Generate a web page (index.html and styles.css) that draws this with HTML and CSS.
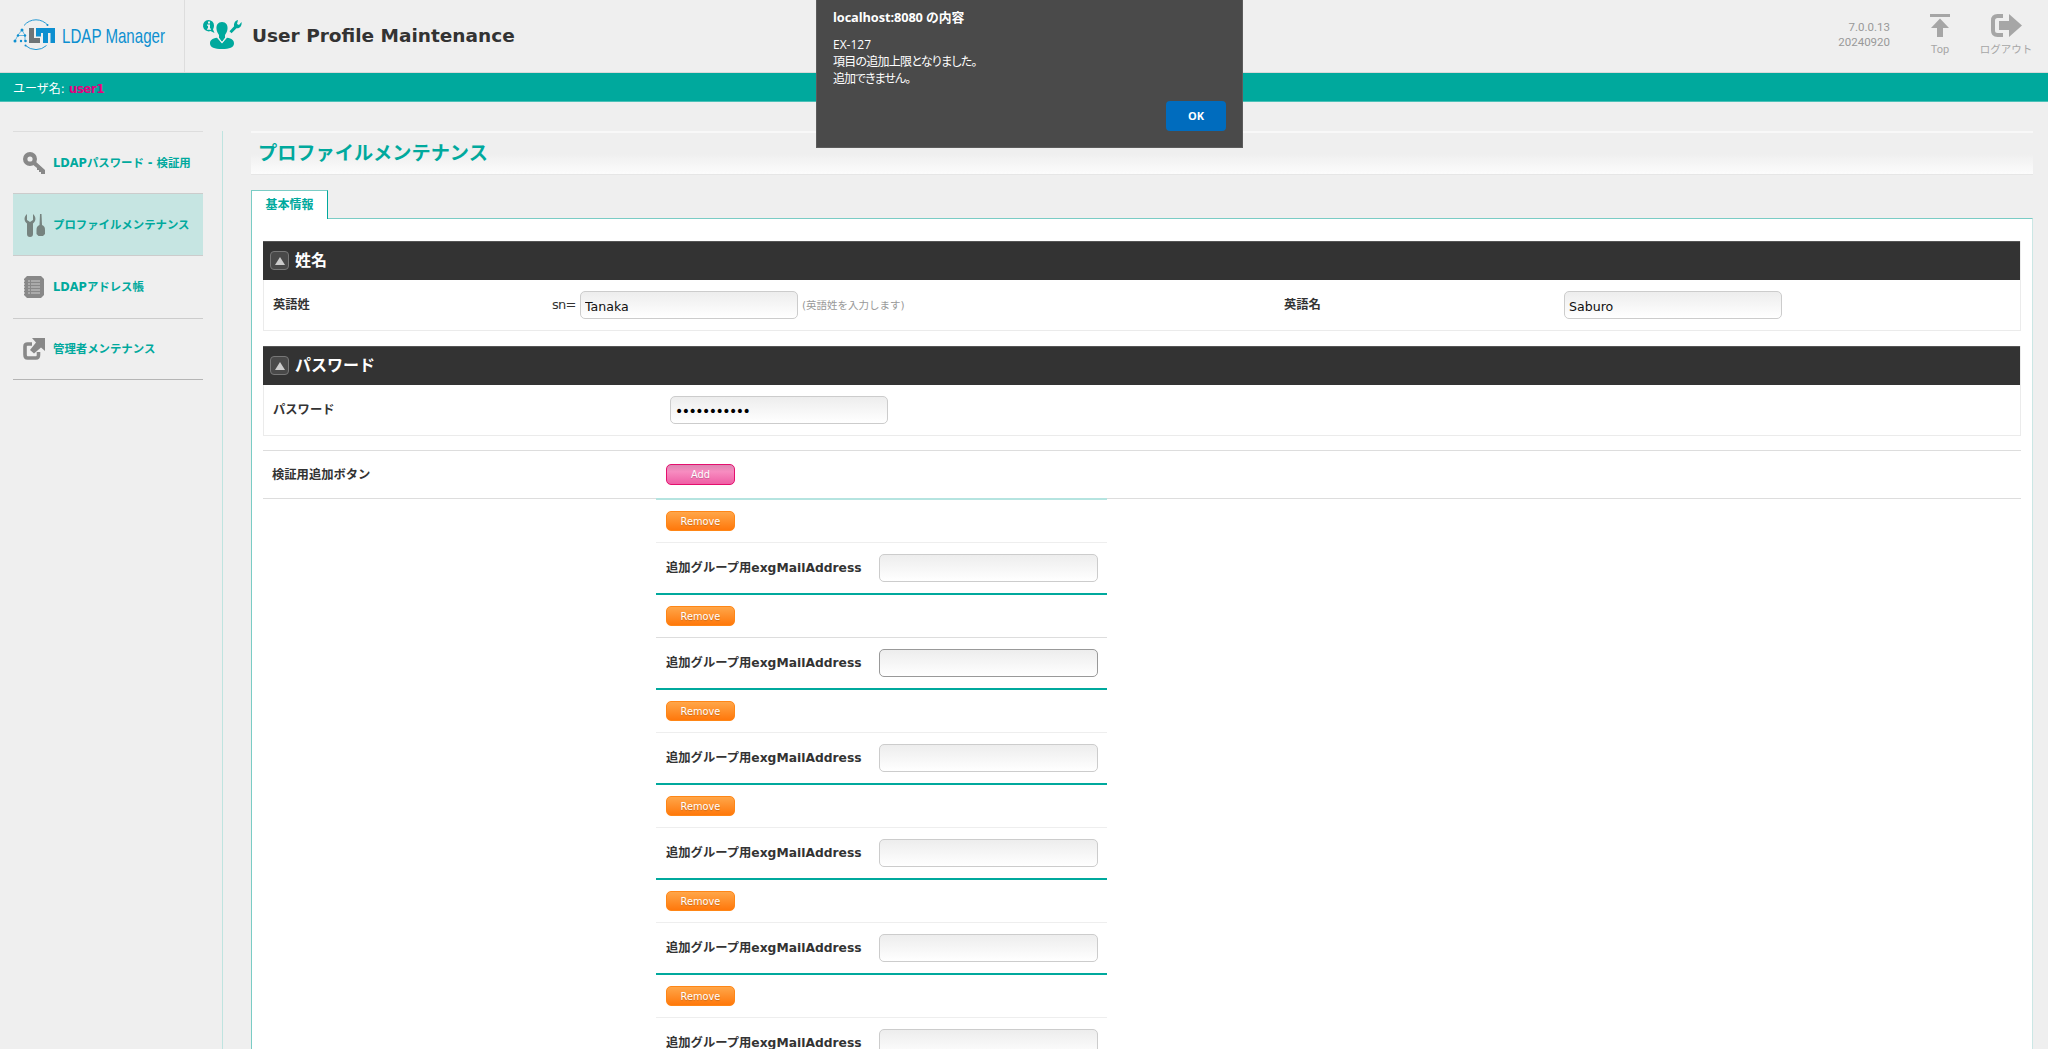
FILE: index.html
```html
<!DOCTYPE html>
<html lang="ja">
<head>
<meta charset="utf-8">
<title>LDAP Manager</title>
<link rel="stylesheet" href="styles.css">
</head>
<body>
<header class="header">
  <div class="brand">
    <svg width="176" height="60" viewBox="5 0 176 60">
      <g fill="none" stroke="#0d8fd0" stroke-width=".9">
        <path d="M24 25.500a15.500 15.500 0 0 1 24 0M25.500 45.500a15.500 15.500 0 0 0 21 0"/>
        <path d="M22 30l-4 5-3 6M22 30l3 5.500v5.500M18 35.500h6" stroke-width=".6"/>
      </g>
      <g fill="#0d8fd0"><circle cx="22" cy="30" r="1.5"/><circle cx="18" cy="35.500" r="1.200"/><circle cx="25" cy="35.500" r="1.200"/><circle cx="15" cy="41" r="1.500"/><circle cx="21" cy="41" r="1.200"/><circle cx="25.500" cy="41" r="1.300"/><circle cx="47.500" cy="25" r="1"/><circle cx="25.500" cy="45.500" r="1"/></g>
      <path d="M29 28h5v10h6v5H29z" fill="#6e7477"/>
      <path d="M36 28h19v15h-4.500V33H48v10h-5V33h-2v3.500h-5z" fill="#0d8fd0"/>
      <text x="62" y="43" class="brand-name" textLength="103" lengthAdjust="spacingAndGlyphs">LDAP Manager</text>
    </svg>
  </div>
  <div class="app">
    <svg width="40" height="32" viewBox="203 19 40 32" fill="#00a99d">
      <path d="M208.500 20a5.500 5.500 0 0 1 5.500 5.500c0 2-.8 3.500-1 4l1.500 3.500-4-1.900A5.700 5.700 0 1 1 208.500 20z"/>
      <path d="M208 21.500h2v2h-2zM207 24.500h3v4h1v1.200h-4v-1.200h1v-2.800h-1z" fill="#efefef"/>
      <path d="M222 22c4 0 6 3 5.500 7-.4 3-1.500 4.500-2.500 6v3l-3 4-3-4v-3c-1-1.500-2.200-3-2.500-6-.4-4 1.500-7 5.500-7z"/>
      <path d="M217 37.800l5 5.700 5-5.700c5 .4 7 2.700 7 5.700 0 3.800-4.500 5.500-12 5.500s-12-1.700-12-5.500c0-3 2-5.300 7-5.700z"/>
      <path d="M218.500 38l3.500 4.500 3.500-4.500" fill="none" stroke="#efefef" stroke-width="1"/>
      <path d="M238 20l-1 4 2 1 2.500-3c.7 4-1.800 6.700-5 6.200l-5 5-2-2 4.600-5c-.6-3 1.400-5.800 3.900-6.200z"/>
    </svg>
    <h1>User Profile Maintenance</h1>
  </div>
  <div class="version">7.0.0.13<br>20240920</div>
  <a class="tool top">
    <svg width="20" height="23" viewBox="0 0 20 23" fill="#a6a6a6"><path d="M0 0h20v3H0zM10 4.500l9 9.500h-6v9H7v-9H1z"/></svg>
    <span>Top</span>
  </a>
  <a class="tool logout">
    <svg width="31" height="23" viewBox="0 0 31 23"><path d="M12 2H6.500C3.500 2 2 3.500 2 6.500v10C2 19.500 3.500 21 6.500 21H12" fill="none" stroke="#a6a6a6" stroke-width="4"/><path d="M8 7h10V0l13 11.500L18 23v-7H8z" fill="#a6a6a6"/></svg>
    <span>ログアウト</span>
  </a>
</header>
<div class="userbar"><span>ユーザ名:</span><b>user1</b></div>
<div class="layout">
  <nav class="side">
    <a class="item"><svg width="22" height="22" viewBox="0 0 22 22"><circle cx="7" cy="7" r="4.800" fill="none" stroke="#888" stroke-width="4.400"/><path d="M9 12l3-3 10 9v4h-4v-2h-2v-2h-2v-2z" fill="#888"/></svg><span>LDAPパスワード - 検証用</span></a>
    <a class="item on"><svg width="22" height="22" viewBox="0 0 22 22" fill="#76837f"><path d="M4 0v6l3 2 3-2V0c3.500 3 3 7 0 9.500V20a3 3 0 0 1-6 0V9.500C1 7 .5 3 4 0zM17 0h1.500l.5 11c2 1 3 2 3 5v4l-2 2h-4.500l-2-2v-4c0-3 1-4 3-5z"/></svg><span>プロファイルメンテナンス</span></a>
    <a class="item"><svg width="22" height="22" viewBox="0 0 22 22"><path d="M4 0h14l3 3v16l-3 3H4l-3-3V3z" fill="#888"/><path d="M5 5h2M8 5h9M5 8h2M8 8h9M5 11h2M8 11h9M5 14h2M8 14h9M5 17h2M8 17h9" stroke="#ccc" stroke-width="1.200"/><path d="M0 5h2M0 8h2M0 11h2M0 14h2M0 17h2" stroke="#efefef"/></svg><span>LDAPアドレス帳</span></a>
    <a class="item"><svg width="22" height="22" viewBox="0 0 22 22"><path d="M9 6H4.500Q2 6 2 8.500v8Q2 20 4.500 20H13q2.500 0 2.500-3v-3" fill="none" stroke="#888" stroke-width="3.600"/><path d="M9 0h13v13l-4-3.500-7 6L7 12l6-7.500z" fill="#888"/></svg><span>管理者メンテナンス</span></a>
  </nav>
  <main class="main">
    <h2>プロファイルメンテナンス</h2>
    <div class="tabs"><span class="tab">基本情報</span></div>
    <div class="panel">
      <section class="box">
        <h3><i class="toggle"></i><span>姓名</span></h3>
        <div class="row">
          <label class="label">英語姓</label><span class="attr">sn=</span><input class="field" value="Tanaka"><span class="hint">(英語姓を入力します)</span>
          <label class="label second">英語名</label><input class="field" value="Saburo">
        </div>
      </section>
      <section class="box">
        <h3><i class="toggle"></i><span>パスワード</span></h3>
        <div class="row pw"><label class="label">パスワード</label><input class="field" type="text" value="•••••••••••"></div>
      </section>
      <div class="addrow"><label class="label">検証用追加ボタン</label><button class="btn add">Add</button></div>
      <div class="groups">
        <div class="group first"><div class="ctl"><button class="btn">Remove</button></div><div class="entry"><label>追加グループ用<b>exgMailAddress</b></label><input class="field"></div></div>
        <div class="group"><div class="ctl dark"><button class="btn">Remove</button></div><div class="entry"><label>追加グループ用<b>exgMailAddress</b></label><input class="field strong"></div></div>
        <div class="group"><div class="ctl"><button class="btn">Remove</button></div><div class="entry"><label>追加グループ用<b>exgMailAddress</b></label><input class="field"></div></div>
        <div class="group"><div class="ctl"><button class="btn">Remove</button></div><div class="entry"><label>追加グループ用<b>exgMailAddress</b></label><input class="field"></div></div>
        <div class="group"><div class="ctl"><button class="btn">Remove</button></div><div class="entry"><label>追加グループ用<b>exgMailAddress</b></label><input class="field"></div></div>
        <div class="group"><div class="ctl"><button class="btn">Remove</button></div><div class="entry"><label>追加グループ用<b>exgMailAddress</b></label><input class="field"></div></div>
      </div>
    </div>
  </main>
</div>
<div class="dialog" role="alertdialog">
  <strong>localhost:8080 <span>の内容</span></strong>
  <p>EX-127<br><span class="m1">項目の追加上限となりました。</span><br><span class="m2">追加できません。</span></p>
  <button class="ok">OK</button>
</div>
</body>
</html>
```
FILE: styles.css
```css
* { box-sizing: border-box; }
body {
  margin: 0;
  height: 1049px;
  overflow: hidden;
  background: #efefef;
  color: #333;
  font: 12px/16px "DejaVu Sans", "Noto Sans CJK JP", sans-serif;
}
h1, h2, h3, p { margin: 0; }
svg { display: block; flex: none; overflow: visible; }

.header { display: flex; height: 73px; border-bottom: 1px solid #d9d9d9; }
.brand { width: 185px; padding: 0 0 0 5px; border-right: 1px solid #ddd; }
.brand-name { font: 21px "Liberation Sans", sans-serif; fill: #0d8fd0; }
.app { display: flex; flex: 1; padding: 19px 0 0 18px; }
.app h1 { margin-left: 9px; font: bold 18.500px/34px "DejaVu Sans", sans-serif; white-space: nowrap; }
.version { padding-top: 20px; font: 11.500px/15px Roboto, sans-serif; color: #999; text-align: right; }
.tool { display: flex; flex-direction: column; align-items: center; padding-top: 14px; color: #a6a6a6; }
.tool span { margin-top: 5px; font: 11px/16px Roboto, "Noto Sans CJK JP", sans-serif; white-space: nowrap; }
.top { width: 40px; margin-left: 30px; }
.logout { width: 56px; margin: 0 14px 0 18px; }
.logout span { font-size: 10.500px; }

.userbar { display: flex; align-items: center; gap: 5px; height: 29px; padding: 3px 0 0 13px; background: #00a99d; border-bottom: 1px solid #4bc1b8; color: #fff; font-size: 12px; }
.userbar b { margin-left: -1px; color: #e4007f; letter-spacing: -.6px; }

.layout { display: flex; padding-top: 29px; height: 947px; }
.side { width: 223px; padding: 0 19px 0 13px; border-right: 1px solid #bfe4e0; }
.item { display: flex; align-items: center; gap: 8px; height: 62.300px; padding: 0 0 0 10px; border-top: 1px solid #ccc; color: #00a99d; font-weight: bold; font-size: 11.400px; white-space: nowrap; }
.item span { padding-top: 1px; }
.item:first-child { height: 62px; border-top-color: #ddd; }
.item:last-child { border-bottom: 1px solid #b5b5b5; }
.item.on { background: #c6e5e2; }

.main { flex: 1; padding: 0 15px 0 28px; min-width: 0; }
.main h2 { height: 44px; padding-left: 7px; border-top: 2px solid #f8f8f8; border-bottom: 1px solid #e6e6e6; background: linear-gradient(#efefef 50%, #fcfcfc); color: #00a99d; font-size: 19.200px; line-height: 41px; }
.tabs { display: flex; height: 44px; padding-top: 15px; }
.tab { z-index: 1; width: 77px; height: 29px; border: 1px solid #7accc5; border-right-color: #00a99d; border-bottom: 0; background: #fff; color: #00a99d; font-weight: bold; text-align: center; line-height: 28px; }
.panel { height: 840px; margin-top: -1px; padding: 22px 11px 0; border: 1px solid #7accc5; border-right-color: #cbe7e5; background: #fff; }

.box { margin-bottom: 15px; border: 1px solid #ebebeb; border-top: 0; }
.box h3 { display: flex; align-items: center; gap: 6px; height: 39px; margin-left: -1px; padding: 0 0 1px 7px; background: #333; border-top: 1px solid #555; color: #fff; font-size: 16px; }
.toggle { display: grid; place-items: center; width: 19px; height: 19px; border: 1px solid #777; border-radius: 4px; background: #494949; }
.toggle::before { content: ""; border: 5px solid transparent; border-top: 0; border-bottom: 8px solid #ccc; }
.row { display: flex; align-items: center; height: 50px; padding-left: 9px; }
.label { width: 279px; font-weight: bold; font-size: 12.300px; }
.attr { width: 28px; font-size: 13px; letter-spacing: -.8px; }
.field { width: 218px; height: 28px; padding: 3px 4px 1px; border: 1px solid #ccc; border-radius: 5px; background: linear-gradient(#ededed, #fff); font: 12.600px "DejaVu Sans", sans-serif; color: #111; }
.field.strong { border-color: #999; }
.hint { width: 486px; padding-left: 4px; color: #999; font-size: 10.500px; }
.label.second { width: 280px; }
.pw .label { width: 397px; }
.pw .field { font-size: 14px; letter-spacing: -1.510px; color: #000; }
.addrow { display: flex; align-items: center; height: 49px; margin-top: -1px; padding-left: 9px; border: solid #ddd; border-width: 1px 0; }
.addrow .label { width: 394px; }
.btn { display: block; width: 69px; height: 20px; padding: 0; border: 1px solid #ff8616; border-radius: 5px; background: linear-gradient(#ffa649, #ff780b); color: #fff; font: 9.800px "DejaVu Sans", sans-serif; text-shadow: 0 1px 1px #0003; }
.btn.add { height: 21px; border-color: #e4106e; background: linear-gradient(#dd86b2, #f78cc0 35%, #ef5fa5); }
.groups { width: 451px; margin: -1px 0 0 393px; }
.groups .field { width: 219px; }
.group { height: 95px; border-top: 2px solid #00a99d; }
.group.first { border-top-color: #b5e4e0; }
.ctl { height: 43px; padding: 11px 10px 0; border-bottom: 1px solid #eee; }
.ctl.dark { border-color: #ddd; }
.entry { display: flex; align-items: center; justify-content: space-between; height: 50px; padding: 0 9px 0 10px; font-weight: bold; font-size: 12.300px; white-space: nowrap; }

.dialog { position: absolute; left: 816px; top: 0; width: 427px; height: 148px; padding: 8px 16px; background: #4a4a4a; border: 1px solid #5c5c5c; border-top: 0; color: #fff; font: 12px/17px "Open Sans", "Noto Sans CJK JP", sans-serif; }
.dialog strong { display: block; font-size: 12.800px; line-height: 18px; letter-spacing: -.1px; }
.dialog p { margin-top: 10px; }
.m1, .m2 { font-feature-settings: "palt"; letter-spacing: -.75px; }
.m2 { letter-spacing: -1px; }
.ok { position: absolute; right: 16px; top: 101px; width: 60px; height: 30px; padding: 0 0 1px; border: 0; border-radius: 4px; background: #006cbe; color: #fff; font: bold 11px "Open Sans", sans-serif; }
```
